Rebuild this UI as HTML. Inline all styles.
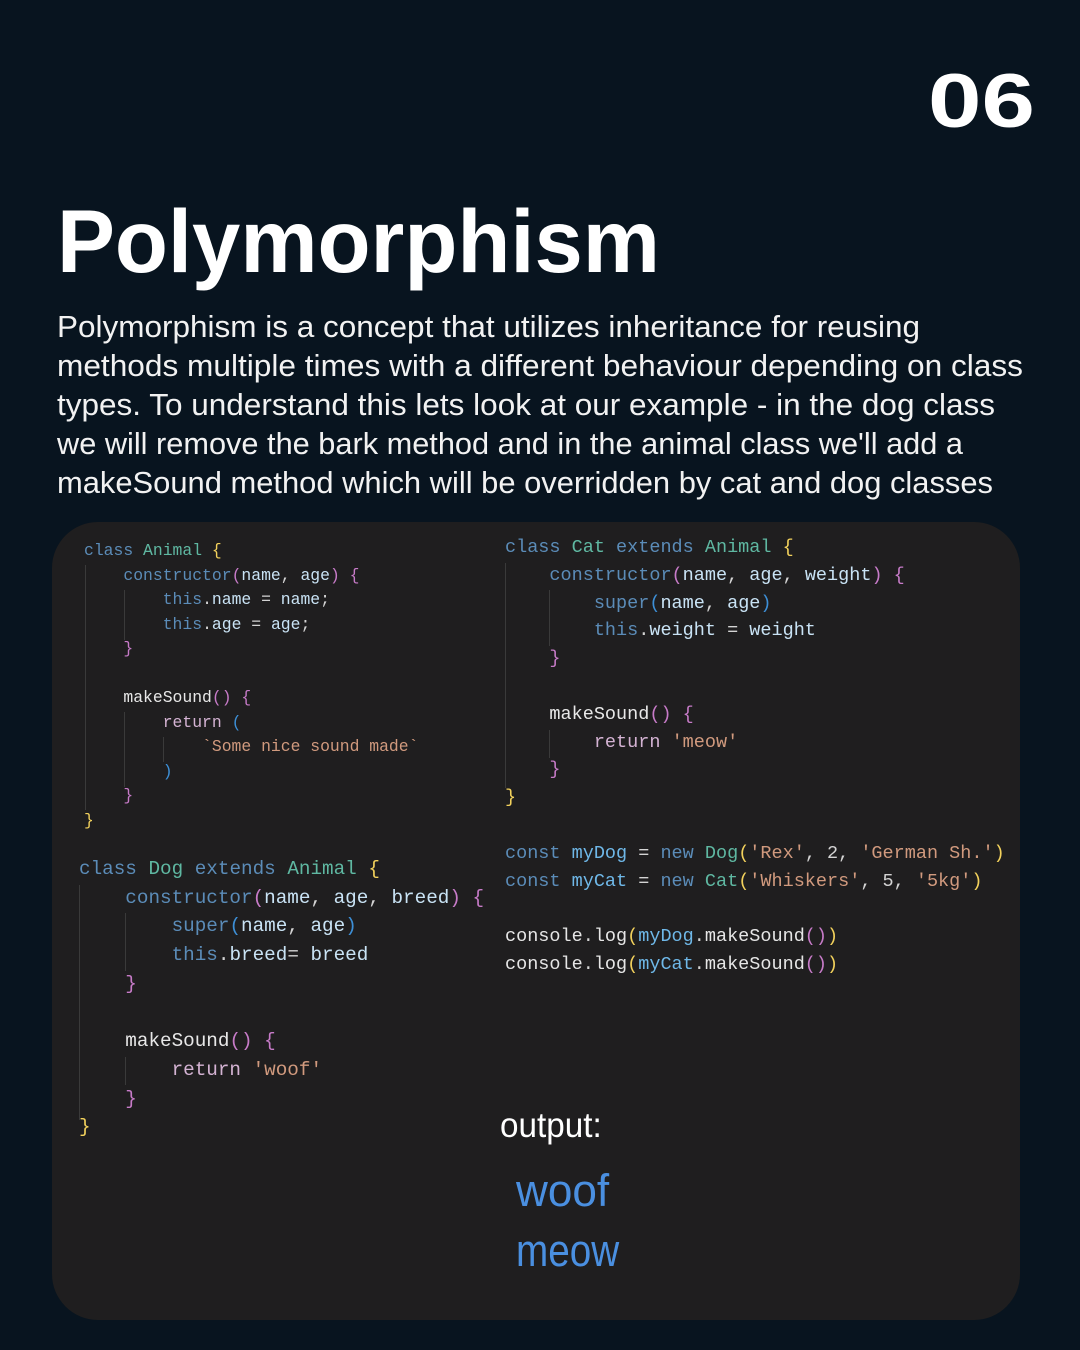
<!DOCTYPE html>
<html><head><meta charset="utf-8">
<style>
html,body{margin:0;padding:0;}
body{width:1080px;height:1350px;background:#08141f;position:relative;overflow:hidden;font-family:"Liberation Sans",sans-serif;}
svg.t{position:absolute;left:0;top:0;}
.card{position:absolute;left:52px;top:522px;width:968px;height:798px;background:#1f1e1f;border-radius:46px;}
pre{position:absolute;margin:0;font-family:"Liberation Mono",monospace;color:#d4d4d4;white-space:pre;}
.k{color:#5b8cb8}.c{color:#5fb8a2}.v{color:#c9e3f5}.y{color:#f2d15c}.p{color:#c77bc8}.b{color:#3d8fd6}.s{color:#d19a7e}.r{color:#d4b3d3}.w{color:#e6e6e6}.m{color:#e8e8e8}.lv{color:#6fb8e8}
.g{position:absolute;width:1px;background:#3a3a3a;}
.out{position:absolute;font-family:"Liberation Sans",sans-serif;transform-origin:0 0;}
</style></head><body>
<svg class="t" width="1080" height="520">
<text x="928" y="127" font-family="Liberation Sans" font-weight="bold" font-size="76" fill="#fff" textLength="107" lengthAdjust="spacingAndGlyphs">06</text>
<text x="57" y="272" font-family="Liberation Sans" font-weight="bold" font-size="89" fill="#fff" textLength="603" lengthAdjust="spacingAndGlyphs">Polymorphism</text>
<g font-family="Liberation Sans" font-size="31" fill="#f2f2f2">
<text x="57" y="337" textLength="863" lengthAdjust="spacingAndGlyphs">Polymorphism is a concept that utilizes inheritance for reusing</text>
<text x="57" y="376" textLength="966" lengthAdjust="spacingAndGlyphs">methods multiple times with a different behaviour depending on class</text>
<text x="57" y="415" textLength="938" lengthAdjust="spacingAndGlyphs">types. To understand this lets look at our example - in  the dog class</text>
<text x="57" y="454" textLength="906" lengthAdjust="spacingAndGlyphs">we will remove the bark method and in  the animal  class we'll add a</text>
<text x="57" y="493" textLength="936" lengthAdjust="spacingAndGlyphs">makeSound method which will be overridden  by cat and dog classes</text>
</g>
</svg>
<div class="card"></div>

<div class="g" style="left:85px;top:565px;height:245px"></div>
<div class="g" style="left:124px;top:590px;height:50px"></div>
<div class="g" style="left:124px;top:712px;height:75px"></div>
<div class="g" style="left:163px;top:737px;height:25px"></div>
<pre style="left:84px;top:539px;font-size:16.4px;line-height:24.5px"><span class="k">class</span> <span class="c">Animal</span> <span class="y">{</span>
    <span class="k">constructor</span><span class="p">(</span><span class="v">name</span>, <span class="v">age</span><span class="p">)</span> <span class="p">{</span>
        <span class="k">this</span>.<span class="v">name</span> = <span class="v">name</span>;
        <span class="k">this</span>.<span class="v">age</span> = <span class="v">age</span>;
    <span class="p">}</span>

    <span class="m">makeSound</span><span class="p">()</span> <span class="p">{</span>
        <span class="r">return</span> <span class="b">(</span>
            <span class="s">`Some nice sound made`</span>
        <span class="b">)</span>
    <span class="p">}</span>
<span class="y">}</span></pre>

<div class="g" style="left:79px;top:885px;height:235px"></div>
<div class="g" style="left:125px;top:913px;height:58px"></div>
<div class="g" style="left:125px;top:1057px;height:28px"></div>
<pre style="left:79px;top:855px;font-size:19.3px;line-height:28.7px"><span class="k">class</span> <span class="c">Dog</span> <span class="k">extends</span> <span class="c">Animal</span> <span class="y">{</span>
    <span class="k">constructor</span><span class="p">(</span><span class="v">name</span>, <span class="v">age</span>, <span class="v">breed</span><span class="p">)</span> <span class="p">{</span>
        <span class="k">super</span><span class="b">(</span><span class="v">name</span>, <span class="v">age</span><span class="b">)</span>
        <span class="k">this</span>.<span class="v">breed</span>= <span class="v">breed</span>
    <span class="p">}</span>

    <span class="m">makeSound</span><span class="p">()</span> <span class="p">{</span>
        <span class="r">return</span> <span class="s">'woof'</span>
    <span class="p">}</span>
<span class="y">}</span></pre>

<div class="g" style="left:505px;top:563px;height:225px"></div>
<div class="g" style="left:549px;top:590px;height:56px"></div>
<div class="g" style="left:549px;top:730px;height:28px"></div>
<pre style="left:505px;top:534px;font-size:18.5px;line-height:27.8px"><span class="k">class</span> <span class="c">Cat</span> <span class="k">extends</span> <span class="c">Animal</span> <span class="y">{</span>
    <span class="k">constructor</span><span class="p">(</span><span class="v">name</span>, <span class="v">age</span>, <span class="v">weight</span><span class="p">)</span> <span class="p">{</span>
        <span class="k">super</span><span class="b">(</span><span class="v">name</span>, <span class="v">age</span><span class="b">)</span>
        <span class="k">this</span>.<span class="v">weight</span> = <span class="v">weight</span>
    <span class="p">}</span>

    <span class="m">makeSound</span><span class="p">()</span> <span class="p">{</span>
        <span class="r">return</span> <span class="s">'meow'</span>
    <span class="p">}</span>
<span class="y">}</span>

<span class="k">const</span> <span class="lv">myDog</span> = <span class="k">new</span> <span class="c">Dog</span><span class="y">(</span><span class="s">'Rex'</span>, 2, <span class="s">'German Sh.'</span><span class="y">)</span>
<span class="k">const</span> <span class="lv">myCat</span> = <span class="k">new</span> <span class="c">Cat</span><span class="y">(</span><span class="s">'Whiskers'</span>, 5, <span class="s">'5kg'</span><span class="y">)</span>

<span class="w">console</span>.<span class="w">log</span><span class="y">(</span><span class="lv">myDog</span>.<span class="w">makeSound</span><span class="p">()</span><span class="y">)</span>
<span class="w">console</span>.<span class="w">log</span><span class="y">(</span><span class="lv">myCat</span>.<span class="w">makeSound</span><span class="p">()</span><span class="y">)</span></pre>

<div class="out" style="left:500px;top:1106px;font-size:35px;color:#fff;transform:scaleX(0.95);">output:</div>
<div class="out" style="left:516px;top:1165px;font-size:45px;color:#4a8fe0;transform:scaleX(0.98);">woof</div>
<div class="out" style="left:516px;top:1225px;font-size:45px;color:#4a8fe0;transform:scaleX(0.86);">meow</div>
</body></html>
